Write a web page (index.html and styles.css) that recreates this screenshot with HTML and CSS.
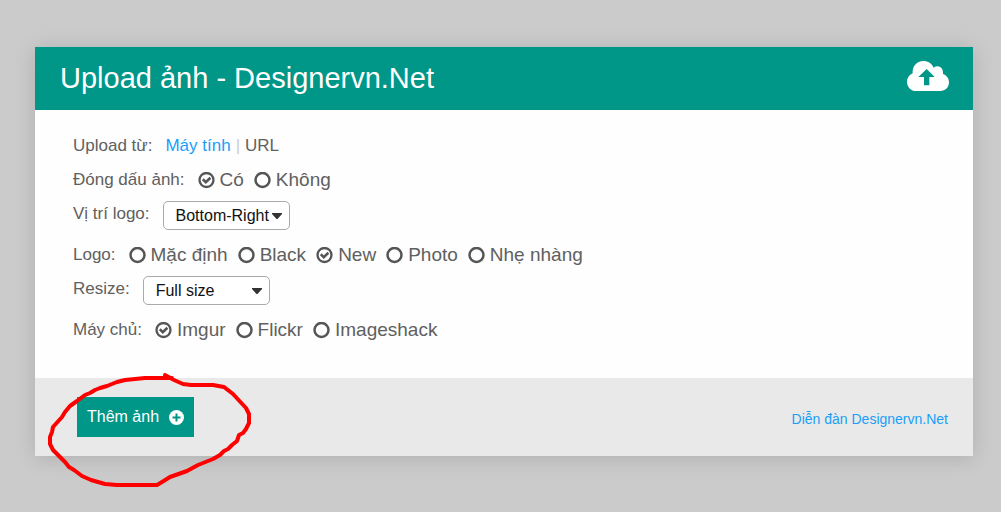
FILE: index.html
```html
<!DOCTYPE html>
<html lang="vi">
<head>
<meta charset="utf-8">
<title>Upload ảnh - Designervn.Net</title>
<link rel="stylesheet" href="styles.css">
</head>
<body>
<main class="card">
  <header class="header">
    <h1 class="title">Upload ảnh - Designervn.Net</h1>
    <svg class="cloud" viewBox="0 0 126 90" aria-hidden="true">
      <path fill="currentColor" fill-rule="evenodd" d="M28 90C12 90 0 78 0 62C0 51 6 42 17 37C15 15 30 0 49 0C63 0 75 8 80 20C94 10 110 20 108 39C119 43 126 52 126 64C126 79 115 90 100 90ZM59 24L34 48H51V73H67V48H83Z"/>
    </svg>
  </header>
  <form class="form">
    <div class="row">
      <span class="label">Upload từ:</span>
      <nav class="sources"><a class="source active" href="#">Máy tính</a><span class="divider">|</span><a class="source" href="#">URL</a></nav>
    </div>
    <div class="row" role="radiogroup" aria-label="Đóng dấu ảnh">
      <span class="label">Đóng dấu ảnh:</span>
      <div class="options">
        <label class="option"><input class="radio" type="radio" name="watermark" checked>Có</label>
        <label class="option"><input class="radio" type="radio" name="watermark">Không</label>
      </div>
    </div>
    <div class="row">
      <label class="label" for="position">Vị trí logo:</label>
      <select class="select" id="position"><option>Bottom-Right</option></select>
    </div>
    <div class="row" role="radiogroup" aria-label="Logo">
      <span class="label">Logo:</span>
      <div class="options">
        <label class="option"><input class="radio" type="radio" name="logo">Mặc định</label>
        <label class="option"><input class="radio" type="radio" name="logo">Black</label>
        <label class="option"><input class="radio" type="radio" name="logo" checked>New</label>
        <label class="option"><input class="radio" type="radio" name="logo">Photo</label>
        <label class="option"><input class="radio" type="radio" name="logo">Nhẹ nhàng</label>
      </div>
    </div>
    <div class="row">
      <label class="label" for="resize">Resize:</label>
      <select class="select" id="resize"><option>Full size</option></select>
    </div>
    <div class="row" role="radiogroup" aria-label="Máy chủ">
      <span class="label">Máy chủ:</span>
      <div class="options">
        <label class="option"><input class="radio" type="radio" name="server" checked>Imgur</label>
        <label class="option"><input class="radio" type="radio" name="server">Flickr</label>
        <label class="option"><input class="radio" type="radio" name="server">Imageshack</label>
      </div>
    </div>
  </form>
  <footer class="footer">
    <div class="action">
      <button class="add" type="button">Thêm ảnh
        <svg class="plus" viewBox="0 0 15 15" aria-hidden="true"><circle cx="7.5" cy="7.5" r="7.5" fill="#fff"/><path d="M7.5 3.5V11.5M3.5 7.5H11.5" stroke="#009688" stroke-width="2"/></svg>
      </button>
      <svg class="scribble" viewBox="0 0 210 120" aria-hidden="true">
        <path d="M132 13L110 13L105 13L85 15L77 17L67 21L60 23L55 25L50 28L45 30L37 36L30 41L25 47L22 52L13 62L12 67L10 72L10 79L13 85L18 90L25 97L29 102L34 105L42 111L51 115L58 117L65 119L77 120L117 120L122 117L130 112L147 106L158 100L173 94L180 90L184 86L188 84L192 80L197 76L199 70L203 68L206 64L209 58L209 49L206 43L193 29L184 22L173 20L151 20L143 19L134 15L125 10"/>
      </svg>
    </div>
    <a class="forum" href="#">Diễn đàn Designervn.Net</a>
  </footer>
</main>
</body>
</html>
```
FILE: styles.css
```css
* {
  box-sizing: border-box;
}

body {
  margin: 0;
  padding: 47px 28px 56px 35px;
  background: #cbcbcb;
  color: #606060;
  font-family: "Liberation Sans", Arial, sans-serif;
}

.card {
  background: #fefefe;
  box-shadow: 0 2px 20px rgba(0, 0, 0, 0.14);
}

.header {
  display: flex;
  align-items: flex-start;
  justify-content: space-between;
  padding: 14px 24px 14px 25px;
  background: #009688;
  color: #fff;
}

.title {
  margin: 0;
  font-size: 29px;
  font-weight: 400;
  line-height: 35px;
}

.cloud {
  width: 42px;
  height: 30px;
}

.form {
  padding: 19px 38px 31px;
}

.row {
  display: flex;
  align-items: flex-start;
  gap: 13px;
  font-size: 17px;
  line-height: 34px;
}

.sources,
.options {
  display: flex;
}

.sources {
  gap: 5px;
}

.source {
  color: inherit;
  text-decoration: none;
}

.source.active,
.forum {
  color: #1a9ff8;
}

.divider {
  color: #ccc;
}

.options {
  flex-wrap: wrap;
  gap: 10px;
  font-size: 19px;
}

.option {
  display: flex;
  align-items: center;
  gap: 5px;
}

.radio {
  appearance: none;
  width: 17px;
  height: 17px;
  margin: 0;
  background: url("data:image/svg+xml,%3Csvg xmlns='http://www.w3.org/2000/svg' viewBox='0 0 17 17'%3E%3Ccircle cx='8.5' cy='8' r='7' fill='none' stroke='%23555' stroke-width='2.5'/%3E%3C/svg%3E") center / 17px no-repeat;
}

.radio:checked {
  background-image: url("data:image/svg+xml,%3Csvg xmlns='http://www.w3.org/2000/svg' viewBox='0 0 17 17'%3E%3Ccircle cx='8.5' cy='8' r='7' fill='none' stroke='%23555' stroke-width='2.3'/%3E%3Cpath d='M4.8 7.3L7.8 10.2L12.4 5.7' fill='none' stroke='%23555' stroke-width='2.6'/%3E%3C/svg%3E");
}

.select {
  appearance: none;
  width: 127px;
  height: 29px;
  margin: 4px 0 8px;
  padding: 0 0 0 12px;
  border: 1px solid #aaa;
  border-radius: 5px;
  background: #fff url("data:image/svg+xml,%3Csvg xmlns='http://www.w3.org/2000/svg' viewBox='0 0 10 6'%3E%3Cpath d='M0 0H10V1L5.5 6H4.5L0 1Z' fill='%23333'/%3E%3C/svg%3E") right 7px center / 10px 6px no-repeat;
  color: #111;
  font: 16px "Liberation Sans", Arial, sans-serif;
}

.footer {
  display: flex;
  align-items: center;
  justify-content: space-between;
  padding: 19px 25px 19px 42px;
  background: #e9e9e9;
}

.action {
  position: relative;
}

.add {
  display: flex;
  align-items: center;
  gap: 10px;
  height: 40px;
  padding: 0 10px;
  border: 0;
  background: #009688;
  color: #fff;
  font: 16px "Liberation Sans", Arial, sans-serif;
}

.plus {
  width: 15px;
  height: 15px;
}

.scribble {
  position: absolute;
  top: -32px;
  left: -37px;
  width: 210px;
  height: 120px;
  overflow: visible;
  pointer-events: none;
  fill: none;
  stroke: #f00;
  stroke-width: 4;
  stroke-linecap: round;
  stroke-linejoin: round;
}

.forum {
  padding-top: 4px;
  font-size: 14px;
  line-height: 20px;
  text-decoration: none;
}
```
